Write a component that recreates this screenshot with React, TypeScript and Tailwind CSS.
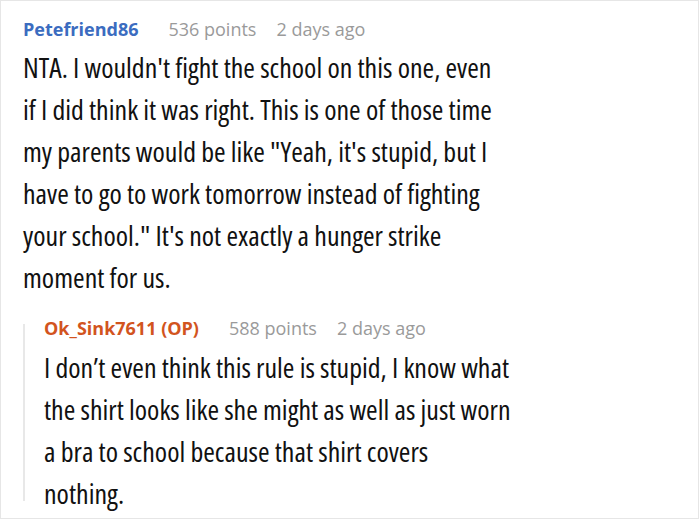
export default function App() {
  return (
    <div className="w-[700px] h-[520px] bg-white">
      <div className="w-[699px] h-[519px] border border-[#e6e6e6] pl-[22px] pt-[14px] font-['Open_Sans',sans-serif]">
        <div className="flex items-baseline text-[18px] leading-[28px]">
          <span className="font-bold text-[#3b6cc0]">Petefriend86</span>
          <span className="ml-[30px] text-[#9a9a9a]">536 points</span>
          <span className="ml-[20px] text-[#9a9a9a]">2 days ago</span>
        </div>
        <p className="mt-[3px] w-[484px] text-[28px] leading-[42px] text-[#111] font-stretch-condensed">
          NTA. I wouldn't fight the school on this one, even if I did think it was right. This is one of
          those time my parents would be like "Yeah, it's stupid, but I have to go to work tomorrow
          instead of fighting your school." It's not exactly a hunger strike moment for us.
        </p>
        <div className="mt-[16px] flex">
          <div className="mt-[10px] h-[177px] w-[2px] shrink-0 bg-[#e8e8e8]" />
          <div className="ml-[19px]">
            <div className="flex items-baseline text-[18px] leading-[28px]">
              <span className="font-bold text-[#d2541e]">Ok_Sink7611 (OP)</span>
              <span className="ml-[30px] text-[#9a9a9a]">588 points</span>
              <span className="ml-[20px] text-[#9a9a9a]">2 days ago</span>
            </div>
            <p className="mt-[4px] w-[467px] text-[28px] leading-[42px] text-[#111] font-stretch-condensed">
              I don’t even think this rule is stupid, I know what the shirt looks like she might as well
              as just worn a bra to school because that shirt covers nothing.
            </p>
          </div>
        </div>
      </div>
    </div>
  );
}
